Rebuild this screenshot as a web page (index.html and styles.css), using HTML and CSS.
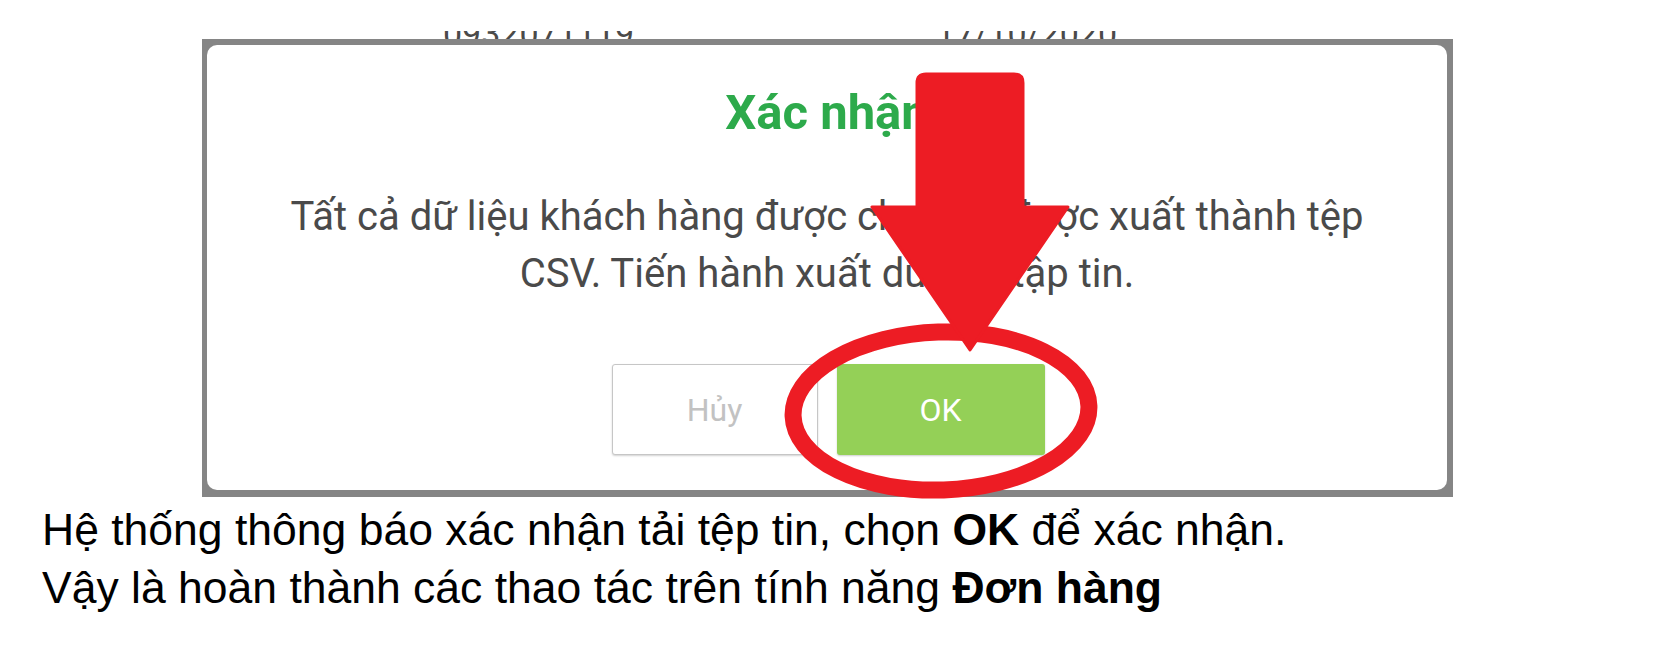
FILE: index.html
```html
<!DOCTYPE html>
<html lang="vi">
<head>
<meta charset="utf-8">
<title>Xác nhận</title>
<link rel="stylesheet" href="styles.css">
</head>
<body>
<div class="page">
  <div class="top-strip">
    <div class="top-text">
      <span class="top-a">0932071119</span>
      <span class="top-b">17/10/2020</span>
    </div>
  </div>
  <div class="frame">
    <div class="dialog">
      <h2 class="title">Xác nhận</h2>
      <p class="message">Tất cả dữ liệu khách hàng được chọn sẽ được xuất thành tệp<br>CSV. Tiến hành xuất dữ liệu tập tin.</p>
      <div class="actions">
        <button class="btn btn-cancel">Hủy</button>
        <button class="btn btn-ok">OK</button>
      </div>
    </div>
  </div>
  <div class="caption">
    <p>Hệ thống thông báo xác nhận tải tệp tin, chọn <b>OK</b> để xác nhận.</p>
    <p>Vậy là hoàn thành các thao tác trên tính năng <b>Đơn hàng</b></p>
  </div>
  <svg class="annotation" width="1654" height="672" viewBox="0 0 1654 672">
    <ellipse cx="941" cy="411" rx="148" ry="79" fill="none" stroke="#ed1c24" stroke-width="17" transform="rotate(-2 941 411)"/>
    <path d="M926 74 H1014 Q1023 74 1023 83 V207 H1068 L970 350 L872 207 H917 V83 Q917 74 926 74 Z" fill="#ed1c24" stroke="#ed1c24" stroke-width="3" stroke-linejoin="round"/>
  </svg>
</div>
</body>
</html>
```

FILE: styles.css
```css
* { box-sizing: border-box; }
html, body { margin: 0; padding: 0; background: #fff; }
.page {
  position: relative;
  width: 1654px;
  height: 672px;
  overflow: hidden;
  background: #fff;
}
.top-strip {
  height: 39px;
  padding-top: 31px;
}
.top-text {
  height: 8px;
  overflow: hidden;
}
.top-text span {
  display: inline-block;
  margin-top: -23px;
  font-family: Roboto, "Noto Sans", sans-serif;
  font-size: 34px;
  line-height: 40px;
  color: #4a4a4a;
  white-space: nowrap;
}
.top-a { margin-left: 443px; }
.top-b { margin-left: 298px; }
.frame {
  margin-left: 202px;
  width: 1251px;
  height: 458px;
  background: #858585;
  padding: 6px 6px 7px 5px;
}
.dialog {
  width: 1240px;
  height: 445px;
  background: #fff;
  border-radius: 10px;
  padding-top: 40px;
  text-align: center;
  font-family: Roboto, "Noto Sans", sans-serif;
}
.title {
  margin: 0;
  font-size: 49px;
  line-height: 56px;
  font-weight: 700;
  color: #2daa4b;
}
.message {
  margin: 47px 0 0;
  font-size: 40px;
  line-height: 57px;
  font-weight: 400;
  color: #4a4a4a;
}
.actions {
  display: flex;
  justify-content: center;
  gap: 19px;
  margin-top: 62px;
  padding-left: 2px;
}
.btn {
  width: 206px;
  height: 91px;
  border-radius: 3px;
  font-family: Roboto, "Noto Sans", sans-serif;
  font-size: 32px;
  padding: 0;
  cursor: pointer;
}
.btn-cancel {
  background: #fff;
  border: 1px solid #c6c6c6;
  color: #c2c2c2;
  box-shadow: 0 1px 2px rgba(0,0,0,0.18);
}
.btn-ok {
  width: 208px;
  background: #94d057;
  border: none;
  color: #fff;
  box-shadow: 0 1px 2px rgba(0,0,0,0.2);
}
.caption {
  margin-top: 4px;
  padding-left: 42px;
  font-family: "Liberation Sans", Arial, sans-serif;
  font-size: 44.5px;
  line-height: 58px;
  color: #000;
}
.caption p { margin: 0; }
.caption b { font-weight: 700; }
.annotation {
  position: absolute;
  left: 0;
  top: 0;
  pointer-events: none;
}
```
